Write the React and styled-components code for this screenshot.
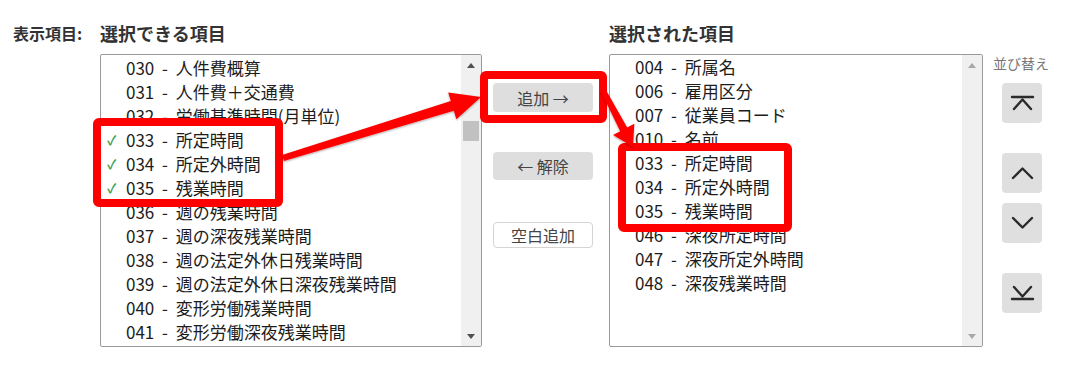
import React from 'react';
import styled, { createGlobalStyle } from 'styled-components';

const AVAILABLE_ITEMS = [
  { code: '030', name: '人件費概算' },
  { code: '031', name: '人件費＋交通費' },
  { code: '032', name: '労働基準時間(月単位)' },
  { code: '033', name: '所定時間', checked: true },
  { code: '034', name: '所定外時間', checked: true },
  { code: '035', name: '残業時間', checked: true },
  { code: '036', name: '週の残業時間' },
  { code: '037', name: '週の深夜残業時間' },
  { code: '038', name: '週の法定外休日残業時間' },
  { code: '039', name: '週の法定外休日深夜残業時間' },
  { code: '040', name: '変形労働残業時間' },
  { code: '041', name: '変形労働深夜残業時間' },
];

const SELECTED_ITEMS = [
  { code: '004', name: '所属名' },
  { code: '006', name: '雇用区分' },
  { code: '007', name: '従業員コード' },
  { code: '010', name: '名前' },
  { code: '033', name: '所定時間' },
  { code: '034', name: '所定外時間' },
  { code: '035', name: '残業時間' },
  { code: '046', name: '深夜所定時間' },
  { code: '047', name: '深夜所定外時間' },
  { code: '048', name: '深夜残業時間' },
];

const GlobalStyle = createGlobalStyle`
  html, body {
    margin: 0;
    padding: 0;
    background: #fff;
  }

  body {
    font-family: 'Noto Sans CJK JP', 'Noto Sans', sans-serif;
    color: #222;
  }
`;

const Page = styled.div`
  position: relative;
  width: 1075px;
  height: 365px;
  box-sizing: border-box;
  display: flex;
  flex-direction: row;
  align-items: flex-start;
  padding: 21px 0 0 13px;
`;

const FieldLabel = styled.div`
  width: 87px;
  font-size: 16px;
  font-weight: 700;
  line-height: 24px;
  color: #333;
`;

const ListColumn = styled.div`
  display: flex;
  flex-direction: column;
  width: ${(props) => props.width}px;
  margin-left: ${(props) => props.offset || 0}px;
`;

const ListTitle = styled.div`
  font-size: 18px;
  font-weight: 700;
  line-height: 24px;
  color: #333;
  margin-bottom: 9px;
`;

const ListBox = styled.div`
  display: flex;
  flex-direction: row;
  height: 293px;
  box-sizing: border-box;
  border: 1px solid #9a9a9a;
  border-radius: 2px;
  background: #fff;
  overflow: hidden;
`;

const ListItems = styled.ul`
  flex: 1;
  list-style: none;
  margin: 0;
  padding: ${(props) => props.top}px 0 0 0;
`;

const ListRow = styled.li`
  position: relative;
  height: 24px;
  line-height: 24px;
  padding-left: 25px;
  font-size: 17px;
  word-spacing: 4px;
  color: #1c1c1c;
  white-space: nowrap;
`;

const CheckMark = styled.span`
  position: absolute;
  left: 6px;
  top: 0;
  font-size: 13px;
  font-weight: 700;
  color: #3fa45a;
`;

const ScrollTrack = styled.div`
  display: flex;
  flex-direction: column;
  width: 20px;
  background: #f0f0f0;
`;

const ScrollArrow = styled.div`
  height: 20px;
  display: flex;
  align-items: center;
  justify-content: center;

  &::after {
    content: '';
    width: 0;
    height: 0;
    border-left: 4px solid transparent;
    border-right: 4px solid transparent;
    ${(props) => (props.down
    ? `border-top: 5px solid ${props.disabled ? '#a8a8a8' : '#505050'};`
    : `border-bottom: 5px solid ${props.disabled ? '#a8a8a8' : '#505050'};`)}
  }
`;

const ScrollBody = styled.div`
  flex: 1;
  display: flex;
  justify-content: center;
`;

const ScrollThumb = styled.div`
  width: 16px;
  height: 20px;
  background: #c1c1c1;
`;

const MiddleColumn = styled.div`
  display: flex;
  flex-direction: column;
  width: 100px;
  margin-left: 11px;
  padding-top: 62px;
`;

const ActionButton = styled.button`
  width: 100px;
  height: ${(props) => props.h}px;
  margin-top: ${(props) => props.gap || 0}px;
  border: ${(props) => (props.outline ? '1px solid #d4d4d4' : 'none')};
  border-radius: 4px;
  background: ${(props) => (props.outline ? '#fff' : '#dedede')};
  font-family: 'Noto Sans CJK JP', sans-serif;
  font-size: 16px;
  color: #444;
  padding: 0;
  cursor: pointer;
`;

const SortColumn = styled.div`
  display: flex;
  flex-direction: column;
  margin-left: 10px;
  padding-top: 34px;
`;

const SortLabel = styled.div`
  font-size: 14px;
  line-height: 17px;
  color: #777;
  margin-bottom: 11px;
`;

const SortButton = styled.button`
  width: 40px;
  height: 40px;
  margin-left: 9px;
  margin-top: ${(props) => props.gap || 0}px;
  border: none;
  border-radius: 4px;
  background: #dfdfdf;
  padding: 0;
  display: flex;
  align-items: center;
  justify-content: center;
  cursor: pointer;
`;

const Overlay = styled.svg`
  position: absolute;
  left: 0;
  top: 0;
  pointer-events: none;
`;

function SortIcon({ kind }) {
  const stroke = { fill: 'none', stroke: '#2b2b2b', strokeWidth: 2.4, strokeLinecap: 'round', strokeLinejoin: 'round' };
  return (
    <svg width="40" height="40" viewBox="0 0 40 40">
      {kind === 'top' && (
        <>
          <line x1="10" y1="14" x2="31" y2="14" {...stroke} />
          <polyline points="12,26 20.5,16.5 29,26" {...stroke} />
        </>
      )}
      {kind === 'up' && <polyline points="11,25 20.5,15.5 30,25" {...stroke} />}
      {kind === 'down' && <polyline points="11,15 20.5,24.5 30,15" {...stroke} />}
      {kind === 'bottom' && (
        <>
          <polyline points="12,14 20.5,23.5 29,14" {...stroke} />
          <line x1="10" y1="26" x2="31" y2="26" {...stroke} />
        </>
      )}
    </svg>
  );
}

function ItemList({ items, top, thumbOffset, disabled }) {
  return (
    <ListBox>
      <ListItems top={top}>
        {items.map((item) => (
          <ListRow key={item.code}>
            {item.checked && <CheckMark>✓</CheckMark>}
            {`${item.code} - ${item.name}`}
          </ListRow>
        ))}
      </ListItems>
      <ScrollTrack>
        <ScrollArrow disabled={disabled} />
        <ScrollBody>
          {thumbOffset !== undefined && <ScrollThumb style={{ marginTop: thumbOffset }} />}
        </ScrollBody>
        <ScrollArrow down disabled={disabled} />
      </ScrollTrack>
    </ListBox>
  );
}

function Annotations() {
  return (
    <Overlay width="1075" height="365" viewBox="0 0 1075 365">
      <defs>
        <filter id="shade" x="-10%" y="-10%" width="120%" height="130%">
          <feDropShadow dx="0" dy="1" stdDeviation="0.8" floodColor="#000" floodOpacity="0.35" />
        </filter>
      </defs>
      <g fill="none" stroke="#ff0000" strokeWidth="8" strokeLinejoin="round">
        <rect x="97" y="122" width="182" height="81" rx="2" />
        <rect x="484" y="75" width="119" height="44" rx="2" />
        <rect x="622" y="147" width="166" height="81" rx="2" />
      </g>
      <g fill="#ff0000" filter="url(#shade)">
        <polygon points="282.1,155.1 450.8,101.1 448.2,92.5 481,97 456.4,119.3 453.8,110.7 283.9,160.9" />
        <polygon points="600.8,91.2 620.2,131.2 613.1,134.9 633,147 634.3,123.7 627.2,127.4 605.2,88.8" />
      </g>
    </Overlay>
  );
}

export default function App() {
  return (
    <>
      <GlobalStyle />
      <Page>
        <FieldLabel>表示項目:</FieldLabel>
        <ListColumn width={382}>
          <ListTitle>選択できる項目</ListTitle>
          <ItemList items={AVAILABLE_ITEMS} top={1} thumbOffset={46} />
        </ListColumn>
        <MiddleColumn>
          <ActionButton h={29}>追加 →</ActionButton>
          <ActionButton h={28} gap={40}>← 解除</ActionButton>
          <ActionButton h={26} gap={42} outline>空白追加</ActionButton>
        </MiddleColumn>
        <ListColumn width={374} offset={16}>
          <ListTitle>選択された項目</ListTitle>
          <ItemList items={SELECTED_ITEMS} top={0} disabled />
        </ListColumn>
        <SortColumn>
          <SortLabel>並び替え</SortLabel>
          <SortButton><SortIcon kind="top" /></SortButton>
          <SortButton gap={30}><SortIcon kind="up" /></SortButton>
          <SortButton gap={10}><SortIcon kind="down" /></SortButton>
          <SortButton gap={30}><SortIcon kind="bottom" /></SortButton>
        </SortColumn>
        <Annotations />
      </Page>
    </>
  );
}
